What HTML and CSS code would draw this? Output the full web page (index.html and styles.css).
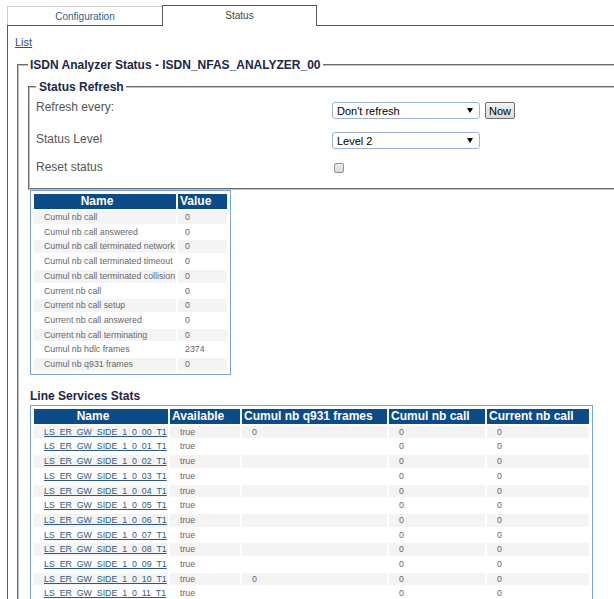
FILE: index.html
```html
<!DOCTYPE html>
<html>
<head>
  <title>ISDN Analyzer Status</title>
  <link rel="stylesheet" href="styles.css">
</head>
<body>
  <div class="tabs">
    <div class="tab">Configuration</div>
    <div class="tab active">Status</div>
  </div>

  <div class="frame">
    <a href="#" class="list-link">List</a>

    <fieldset class="box main">
      <legend>ISDN Analyzer Status - ISDN_NFAS_ANALYZER_00</legend>

      <fieldset class="box refresh">
        <legend>Status Refresh</legend>
        <div class="row r1">
          <span class="label">Refresh every:</span>
          <span class="select"><select><option>Don't refresh</option></select><i class="arrow"></i></span>
          <button class="now">Now</button>
        </div>
        <div class="row r2">
          <span class="label">Status Level</span>
          <span class="select"><select><option>Level 2</option></select><i class="arrow"></i></span>
        </div>
        <div class="row r3">
          <span class="label">Reset status</span>
          <input type="checkbox" class="check">
        </div>
      </fieldset>

      <table class="grid stats">
        <thead>
          <tr><th class="c-name">Name</th><th class="c-value">Value</th></tr>
        </thead>
        <tbody>
          <tr><td>Cumul nb call</td><td class="v">0</td></tr>
          <tr><td>Cumul nb call answered</td><td class="v">0</td></tr>
          <tr><td>Cumul nb call terminated network</td><td class="v">0</td></tr>
          <tr><td>Cumul nb call terminated timeout</td><td class="v">0</td></tr>
          <tr><td>Cumul nb call terminated collision</td><td class="v">0</td></tr>
          <tr><td>Current nb call</td><td class="v">0</td></tr>
          <tr><td>Current nb call setup</td><td class="v">0</td></tr>
          <tr><td>Current nb call answered</td><td class="v">0</td></tr>
          <tr><td>Current nb call terminating</td><td class="v">0</td></tr>
          <tr><td>Cumul nb hdlc frames</td><td class="v">2374</td></tr>
          <tr><td>Cumul nb q931 frames</td><td class="v">0</td></tr>
        </tbody>
      </table>

      <h3 class="section">Line Services Stats</h3>

      <table class="grid lines">
        <thead>
          <tr>
            <th class="l-name">Name</th>
            <th class="l-avail">Available</th>
            <th class="l-q931">Cumul nb q931 frames</th>
            <th class="l-cumul">Cumul nb call</th>
            <th class="l-current">Current nb call</th>
          </tr>
        </thead>
        <tbody>
          <tr><td><a href="#">LS_ER_GW_SIDE_1_0_00_T1</a></td><td>true</td><td>0</td><td>0</td><td>0</td></tr>
          <tr><td><a href="#">LS_ER_GW_SIDE_1_0_01_T1</a></td><td>true</td><td></td><td>0</td><td>0</td></tr>
          <tr><td><a href="#">LS_ER_GW_SIDE_1_0_02_T1</a></td><td>true</td><td></td><td>0</td><td>0</td></tr>
          <tr><td><a href="#">LS_ER_GW_SIDE_1_0_03_T1</a></td><td>true</td><td></td><td>0</td><td>0</td></tr>
          <tr><td><a href="#">LS_ER_GW_SIDE_1_0_04_T1</a></td><td>true</td><td></td><td>0</td><td>0</td></tr>
          <tr><td><a href="#">LS_ER_GW_SIDE_1_0_05_T1</a></td><td>true</td><td></td><td>0</td><td>0</td></tr>
          <tr><td><a href="#">LS_ER_GW_SIDE_1_0_06_T1</a></td><td>true</td><td></td><td>0</td><td>0</td></tr>
          <tr><td><a href="#">LS_ER_GW_SIDE_1_0_07_T1</a></td><td>true</td><td></td><td>0</td><td>0</td></tr>
          <tr><td><a href="#">LS_ER_GW_SIDE_1_0_08_T1</a></td><td>true</td><td></td><td>0</td><td>0</td></tr>
          <tr><td><a href="#">LS_ER_GW_SIDE_1_0_09_T1</a></td><td>true</td><td></td><td>0</td><td>0</td></tr>
          <tr><td><a href="#">LS_ER_GW_SIDE_1_0_10_T1</a></td><td>true</td><td>0</td><td>0</td><td>0</td></tr>
          <tr><td><a href="#">LS_ER_GW_SIDE_1_0_11_T1</a></td><td>true</td><td></td><td>0</td><td>0</td></tr>
        </tbody>
      </table>
    </fieldset>
  </div>
</body>
</html>
```

FILE: styles.css
```css
html {
  overflow: hidden;
}

body {
  margin: 0;
  padding: 0;
  background-color: #ffffff;
  font-family: "Liberation Sans", Arial, sans-serif;
  color: #333333;
}

/* tabs */
.tabs {
  display: flex;
  align-items: flex-end;
  height: 25px;
  padding-left: 7px;
}

.tab {
  box-sizing: border-box;
  width: 155px;
  height: 19px;
  padding-top: 1px;
  border-top: 1px solid #cccccc;
  border-left: 1px solid #cccccc;
  font-size: 10px;
  line-height: 18px;
  text-align: center;
  color: #2a5f96;
}

.tab.active {
  position: relative;
  z-index: 1;
  height: 21px;
  margin-bottom: -1px;
  border: 1px solid #5a5a5a;
  border-bottom: none;
  background-color: #ffffff;
  color: #444444;
}

.frame {
  margin-left: 7px;
  padding: 10px 0 0 7px;
  border-top: 1px solid #5a5a5a;
  border-left: 1px solid #5a5a5a;
  height: 600px;
}

.list-link {
  display: block;
  font-size: 11px;
  line-height: 13px;
  color: #2b4f8a;
}

/* fieldsets */
.box {
  margin: 0;
  border: 2px groove #c0c0c0;
  border-right: none;
  min-width: 0;
}

.box legend {
  font-size: 12px;
  line-height: 14px;
  font-weight: bold;
  color: #1b2747;
}

.main {
  margin: 9px 0 0 2px;
  padding: 8px 0 0 9px;
}

.main > legend {
  padding: 0 2px;
}

.refresh {
  padding: 4px 0 8px 6px;
}

.refresh > legend {
  padding: 0 2px 0 3px;
}

.row {
  display: flex;
  align-items: flex-start;
  height: 30px;
}

.row.r3 {
  height: 22px;
}

.label {
  width: 296px;
  font-size: 12px;
  line-height: 14px;
  color: #555555;
}

.r1 .label {
  margin-top: 2px;
}

.r2 .label {
  margin-top: 4px;
}

.r3 .label {
  margin-top: 2px;
}

.select {
  position: relative;
  display: block;
  margin-top: 4px;
}

.select select {
  display: block;
  appearance: none;
  box-sizing: border-box;
  width: 148px;
  height: 17px;
  margin: 0;
  padding: 0 0 0 4px;
  border: 1px solid #9fb6d2;
  border-radius: 3px;
  background-color: #ffffff;
  font-family: "Liberation Sans", Arial, sans-serif;
  font-size: 11px;
  color: #000000;
}

.r2 .select {
  margin-top: 4px;
}

.arrow {
  position: absolute;
  top: 6px;
  left: 135px;
  width: 0;
  height: 0;
  border-left: 3px solid transparent;
  border-right: 3px solid transparent;
  border-top: 5px solid #000000;
}

.now {
  box-sizing: border-box;
  width: 30px;
  height: 17px;
  margin: 4px 0 0 5px;
  padding: 0;
  border: 1px solid #707070;
  border-radius: 2px;
  background: linear-gradient(#f2f2f2, #dadada);
  font-family: "Liberation Sans", Arial, sans-serif;
  font-size: 11px;
  color: #000000;
}

.check {
  appearance: none;
  box-sizing: border-box;
  width: 10px;
  height: 10px;
  margin: 5px 0 0 2px;
  border: 1px solid #939393;
  border-radius: 2px;
  background: linear-gradient(#eeeeee, #d8d8d8);
}

/* tables */
.grid {
  border-collapse: separate;
  border-spacing: 2px;
  border: 1px solid #7ba4cf;
  padding: 1px;
  margin-left: 2px;
}

.grid th {
  height: 15px;
  padding: 0 0 0 2px;
  background-color: #0b4b8a;
  color: #ffffff;
  font-size: 12px;
  line-height: 15px;
  font-weight: bold;
  text-align: left;
  white-space: nowrap;
}

.grid td {
  height: 12.7px;
  padding: 0 0 0 10px;
  font-size: 8.8px;
  line-height: 12.7px;
  color: #666666;
  white-space: nowrap;
}

.grid tbody tr:nth-child(odd) td {
  background-color: #f4f4f4;
}

.grid a {
  color: #2c5a88;
}

.stats {
  margin-top: 0;
}

.stats .c-name {
  width: 126px;
  padding: 0 16px 0 0;
  text-align: center;
}

.stats .c-value {
  width: 47px;
}

.stats td.v {
  padding-left: 7px;
}

.section {
  margin: 14px 0 2px 2px;
  font-size: 12px;
  line-height: 14px;
  color: #1b2747;
}

.lines .l-name {
  width: 118px;
  padding: 0 16px 0 0;
  text-align: center;
}

.lines .l-avail {
  width: 68px;
}

.lines .l-q931 {
  width: 143px;
}

.lines .l-cumul {
  width: 94px;
}

.lines .l-current {
  width: 100px;
}
```
